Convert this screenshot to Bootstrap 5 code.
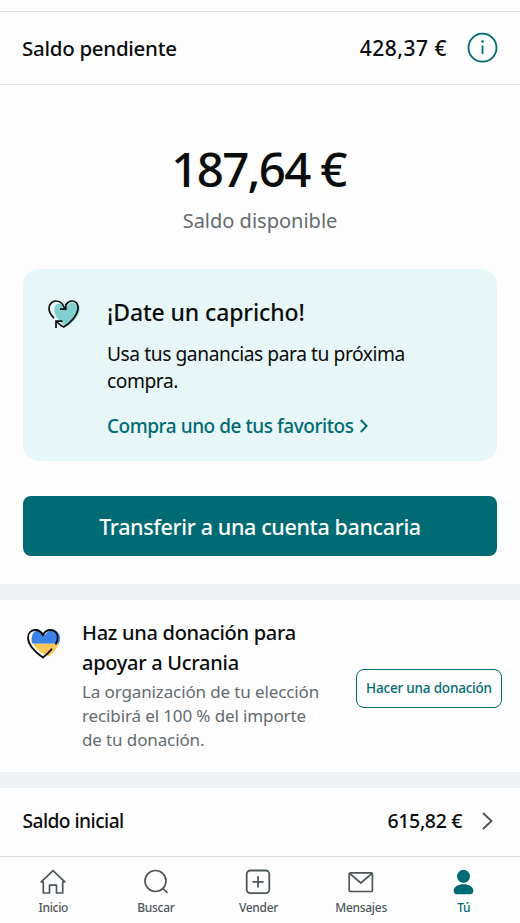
<!DOCTYPE html>
<html lang="es">
<head>
<meta charset="utf-8">
<meta name="viewport" content="width=device-width, initial-scale=1">
<title>Saldo</title>
<link href="https://cdn.jsdelivr.net/npm/bootstrap@5.3.0/dist/css/bootstrap.min.css" rel="stylesheet">
<script src="https://cdn.jsdelivr.net/npm/bootstrap@5.3.0/dist/js/bootstrap.bundle.min.js" defer></script>
<style>
:root{--teal:#006b73;--ink:#0b0c0c;--grey:#646b70;--nav:#4d565b}
body{font-family:"Noto Sans","Open Sans",sans-serif;color:var(--ink);background:#fdfdfd;height:923px;overflow:hidden}
svg{display:block;flex:none;overflow:visible}
.medium{font-weight:500}
.teal{color:var(--teal)}
.muted-ink{color:var(--grey)}
.pending{margin-top:11px;height:74px;border-top:1px solid #dfe1e1;border-bottom:1px solid #e2e4e4;padding:0 22px}
.pending-label{font-size:20.5px;letter-spacing:-.28px}
.pending-sum{font-size:21px;letter-spacing:.5px;margin-right:21px;padding-top:1px}
.balance{padding-top:54px}
.amount{font-size:47.5px;letter-spacing:-1.75px;line-height:60px;font-weight:550;padding-right:3px}
.avail{font-size:20px;line-height:28px;margin-top:8px}
.treat{margin:34px 23px 0;height:192px;border-radius:16px;background:#e7f6f6;padding:28px 25px 0}
.treat-icon{margin-top:2px}
.treat-body{margin-left:28px}
.treat-title{font-size:23px;letter-spacing:-.12px;line-height:30px}
.treat-text{font-size:19.2px;letter-spacing:-.43px;line-height:27px;margin-top:13px}
.treat-link{font-size:19px;letter-spacing:-.46px;line-height:28px;margin-top:18px;text-decoration:none}
.cta{margin:35px 23px 28px;height:60px;border-radius:8px;font-size:21.5px;letter-spacing:-.37px;line-height:1;padding:8px 0 6px}
.cta,.cta:hover{background:var(--teal);color:#fff}
.band{height:16px;background:#edf1f4;flex:none}
.donate{height:172px;padding:18px 18px 0 26px}
.donate-copy{width:250px;margin-left:22px}
.donate-title{font-size:20px;letter-spacing:-.29px;line-height:30px}
.donate-text{font-size:17px;letter-spacing:-.12px;line-height:24px;margin-top:2px}
.donate-btn{width:146px;height:39px;margin-top:51px;padding:0 0 1px;border:1.3px solid var(--teal);border-radius:8px;font-size:13.5px;letter-spacing:-.2px}
.initial{height:68px;padding:0 27px 3px 22.5px}
.initial-label{font-size:19.2px;letter-spacing:-.56px;padding-top:1px}
.initial-sum{font-size:19.5px;letter-spacing:-.35px;margin-right:20px}
.tabs{height:67px;border-top:1px solid #dfe1e1;padding:11px 5px 0 2px}
.tab-item{font-size:12px;letter-spacing:-.3px;line-height:16px;color:var(--nav);text-decoration:none;gap:4px}
.tab-item.current{color:var(--teal)}
</style>
</head>
<body class="d-flex flex-column">
<header class="pending d-flex align-items-center flex-shrink-0">
  <span class="pending-label medium me-auto">Saldo pendiente</span>
  <span class="pending-sum medium">428,37 €</span>
  <svg width="30" height="30" viewBox="0 0 30 30" fill="none" stroke="#006b73"><circle cx="14.500" cy="14.700" r="14" stroke-width="1.8"/><path d="M14.500 12.500v8.500" stroke-width="1.800"/><circle cx="14.500" cy="8.500" r="1.300" fill="#006b73" stroke="none"/></svg>
</header>

<main>
  <section class="balance text-center">
    <div class="amount">187,64 €</div>
    <div class="avail muted-ink">Saldo disponible</div>
  </section>

  <section class="treat d-flex align-items-start">
    <svg class="treat-icon" width="31" height="30" viewBox="0 0 31 30" fill="none" stroke-linecap="round" stroke-linejoin="round"><path d="M19 27.600C13 24.500 6.300 18 6.300 10.500C6.300 5.500 10.500 3.800 14 5.500C16 6.500 17 8 18 9.500C19.500 5 22.500 3.600 26 3.600C30 4 32.500 7.500 31.500 12C30 18.500 24 24 19 27.600Z" fill="#7fcfcf"/><g stroke="#0b0c0c" stroke-width="1.700"><path d="M5.600 18.600C2.800 15.800 1 12.700 1 9.300C1 5 4.200 2 7.800 2C12 2 14.800 4.500 16.200 8.500"/><path d="M12 10.200H17.800V4.800" stroke-linecap="butt" stroke-linejoin="miter"/><path d="M18.600 5.200C19.800 3 21.800 2 24 2C27.600 2 30 4.800 30 8.800C30 16.500 21.500 24.500 15.700 28C13.500 27 11 25 9 23"/><path d="M8 29V22.200H14.500" stroke-linecap="butt" stroke-linejoin="miter"/></g></svg>
    <div class="treat-body">
      <div class="treat-title medium">¡Date un capricho!</div>
      <div class="treat-text">Usa tus ganancias para tu próxima<br>compra.</div>
      <a href="#" class="treat-link teal medium d-flex align-items-center">Compra uno de tus favoritos<svg class="ms-2" width="8" height="14" viewBox="1 0 8 14" fill="none" stroke="#006b73" stroke-width="1.9"><path d="M.8 1L6.600 7L.8 13"/></svg></a>
    </div>
  </section>

  <div class="d-grid"><button type="button" class="btn cta medium">Transferir a una cuenta bancaria</button></div>
  <div class="band"></div>

  <section class="donate d-flex align-items-start">
    <svg class="mt-2" width="34" height="34" viewBox="0 -.500 34 34" fill="none" stroke-linecap="round" stroke-linejoin="round"><path d="M6 17.300C5.200 13 5.300 8 8.500 5.200C12 3 16 5 19 8.400C21 5 24 3.500 28 3.700C32 4.500 34 8 34 12C34 14 33.500 16 32.800 17.300Z" fill="#3b82e6"/><path d="M6 17.300H32.800C31 22 27.500 26.500 22.500 30C17 27.500 9.500 23 6 17.300Z" fill="#fbc757"/><path d="M5 17C7 22 12.500 27 17 31L19 29C13.500 25.500 9 21.500 7 17Z" fill="#fdfdfd"/><path d="M25.500 22.800C23 25.800 20 28.600 16.900 31C9 25.300 2 18.500 2 11.200C2 6.300 5.200 3.500 9.300 3.500C12.800 3.500 15.500 5.500 16.900 8.900C18.300 5.500 21.200 3.500 24.600 3.500C28.800 3.500 31.700 6.600 31.700 10.800C31.700 13 31 15.200 29.900 17.200" stroke="#0b0c0c" stroke-width="1.800"/></svg>
    <div class="donate-copy">
      <div class="donate-title medium">Haz una donación para<br>apoyar a Ucrania</div>
      <div class="donate-text muted-ink">La organización de tu elección<br>recibirá el 100 % del importe<br>de tu donación.</div>
    </div>
    <button type="button" class="btn donate-btn teal medium ms-auto text-nowrap">Hacer una donación</button>
  </section>
  <div class="band"></div>

  <section class="initial d-flex align-items-center">
    <span class="initial-label medium me-auto">Saldo inicial</span>
    <span class="initial-sum medium">615,82 €</span>
    <svg width="11" height="18" viewBox="0 0 11 18" fill="none" stroke="#4d565b" stroke-width="1.900"><path d="M1 1L9.500 9L1 17"/></svg>
  </section>
</main>

<nav class="tabs d-flex align-items-start flex-shrink-0">
  <a href="#" class="tab-item medium col d-flex flex-column align-items-center"><svg width="28" height="28" viewBox="0 0 28 28" fill="none" stroke="#4d565b" stroke-width="1.700" stroke-linejoin="round" stroke-linecap="round"><path d="M4.300 13.800H2.200L14 2.700L25.800 13.800H23.700V25H17.500V17.200H10.500V25H4.300Z"/></svg>Inicio</a>
  <a href="#" class="tab-item medium col d-flex flex-column align-items-center"><svg width="28" height="28" viewBox="0 0 28 28" fill="none" stroke="#4d565b" stroke-width="1.700"><circle cx="13.500" cy="13" r="10.500"/><path d="M20.800 20.300L25.500 25"/></svg>Buscar</a>
  <a href="#" class="tab-item medium col d-flex flex-column align-items-center"><svg width="28" height="28" viewBox="0 0 28 28" fill="none" stroke="#4d565b" stroke-width="1.800"><rect x="2.700" y="2.500" width="22.600" height="22.600" rx="3.500"/><path d="M14 8.200V19.400M8.400 13.800H19.600"/></svg>Vender</a>
  <a href="#" class="tab-item medium col d-flex flex-column align-items-center"><svg width="28" height="28" viewBox="0 0 28 28" fill="none" stroke="#4d565b" stroke-width="1.700" stroke-linejoin="round"><rect x="2.200" y="4.800" width="23.200" height="18.700" rx="1"/><path d="M2.600 5.300L13.800 15L25 5.300"/></svg>Mensajes</a>
  <a href="#" class="tab-item current medium col d-flex flex-column align-items-center"><svg width="28" height="28" viewBox="0 0 28 28" fill="#006b73"><circle cx="13.500" cy="8.300" r="6.500"/><path d="M3.700 22.700C3.700 18.700 8 16.200 13.500 16.200S23.300 18.700 23.300 22.700C23.300 25.200 22 26.200 20 26.200H7C5 26.200 3.700 25.200 3.700 22.700Z"/></svg>Tú</a>
</nav>
</body>
</html>
